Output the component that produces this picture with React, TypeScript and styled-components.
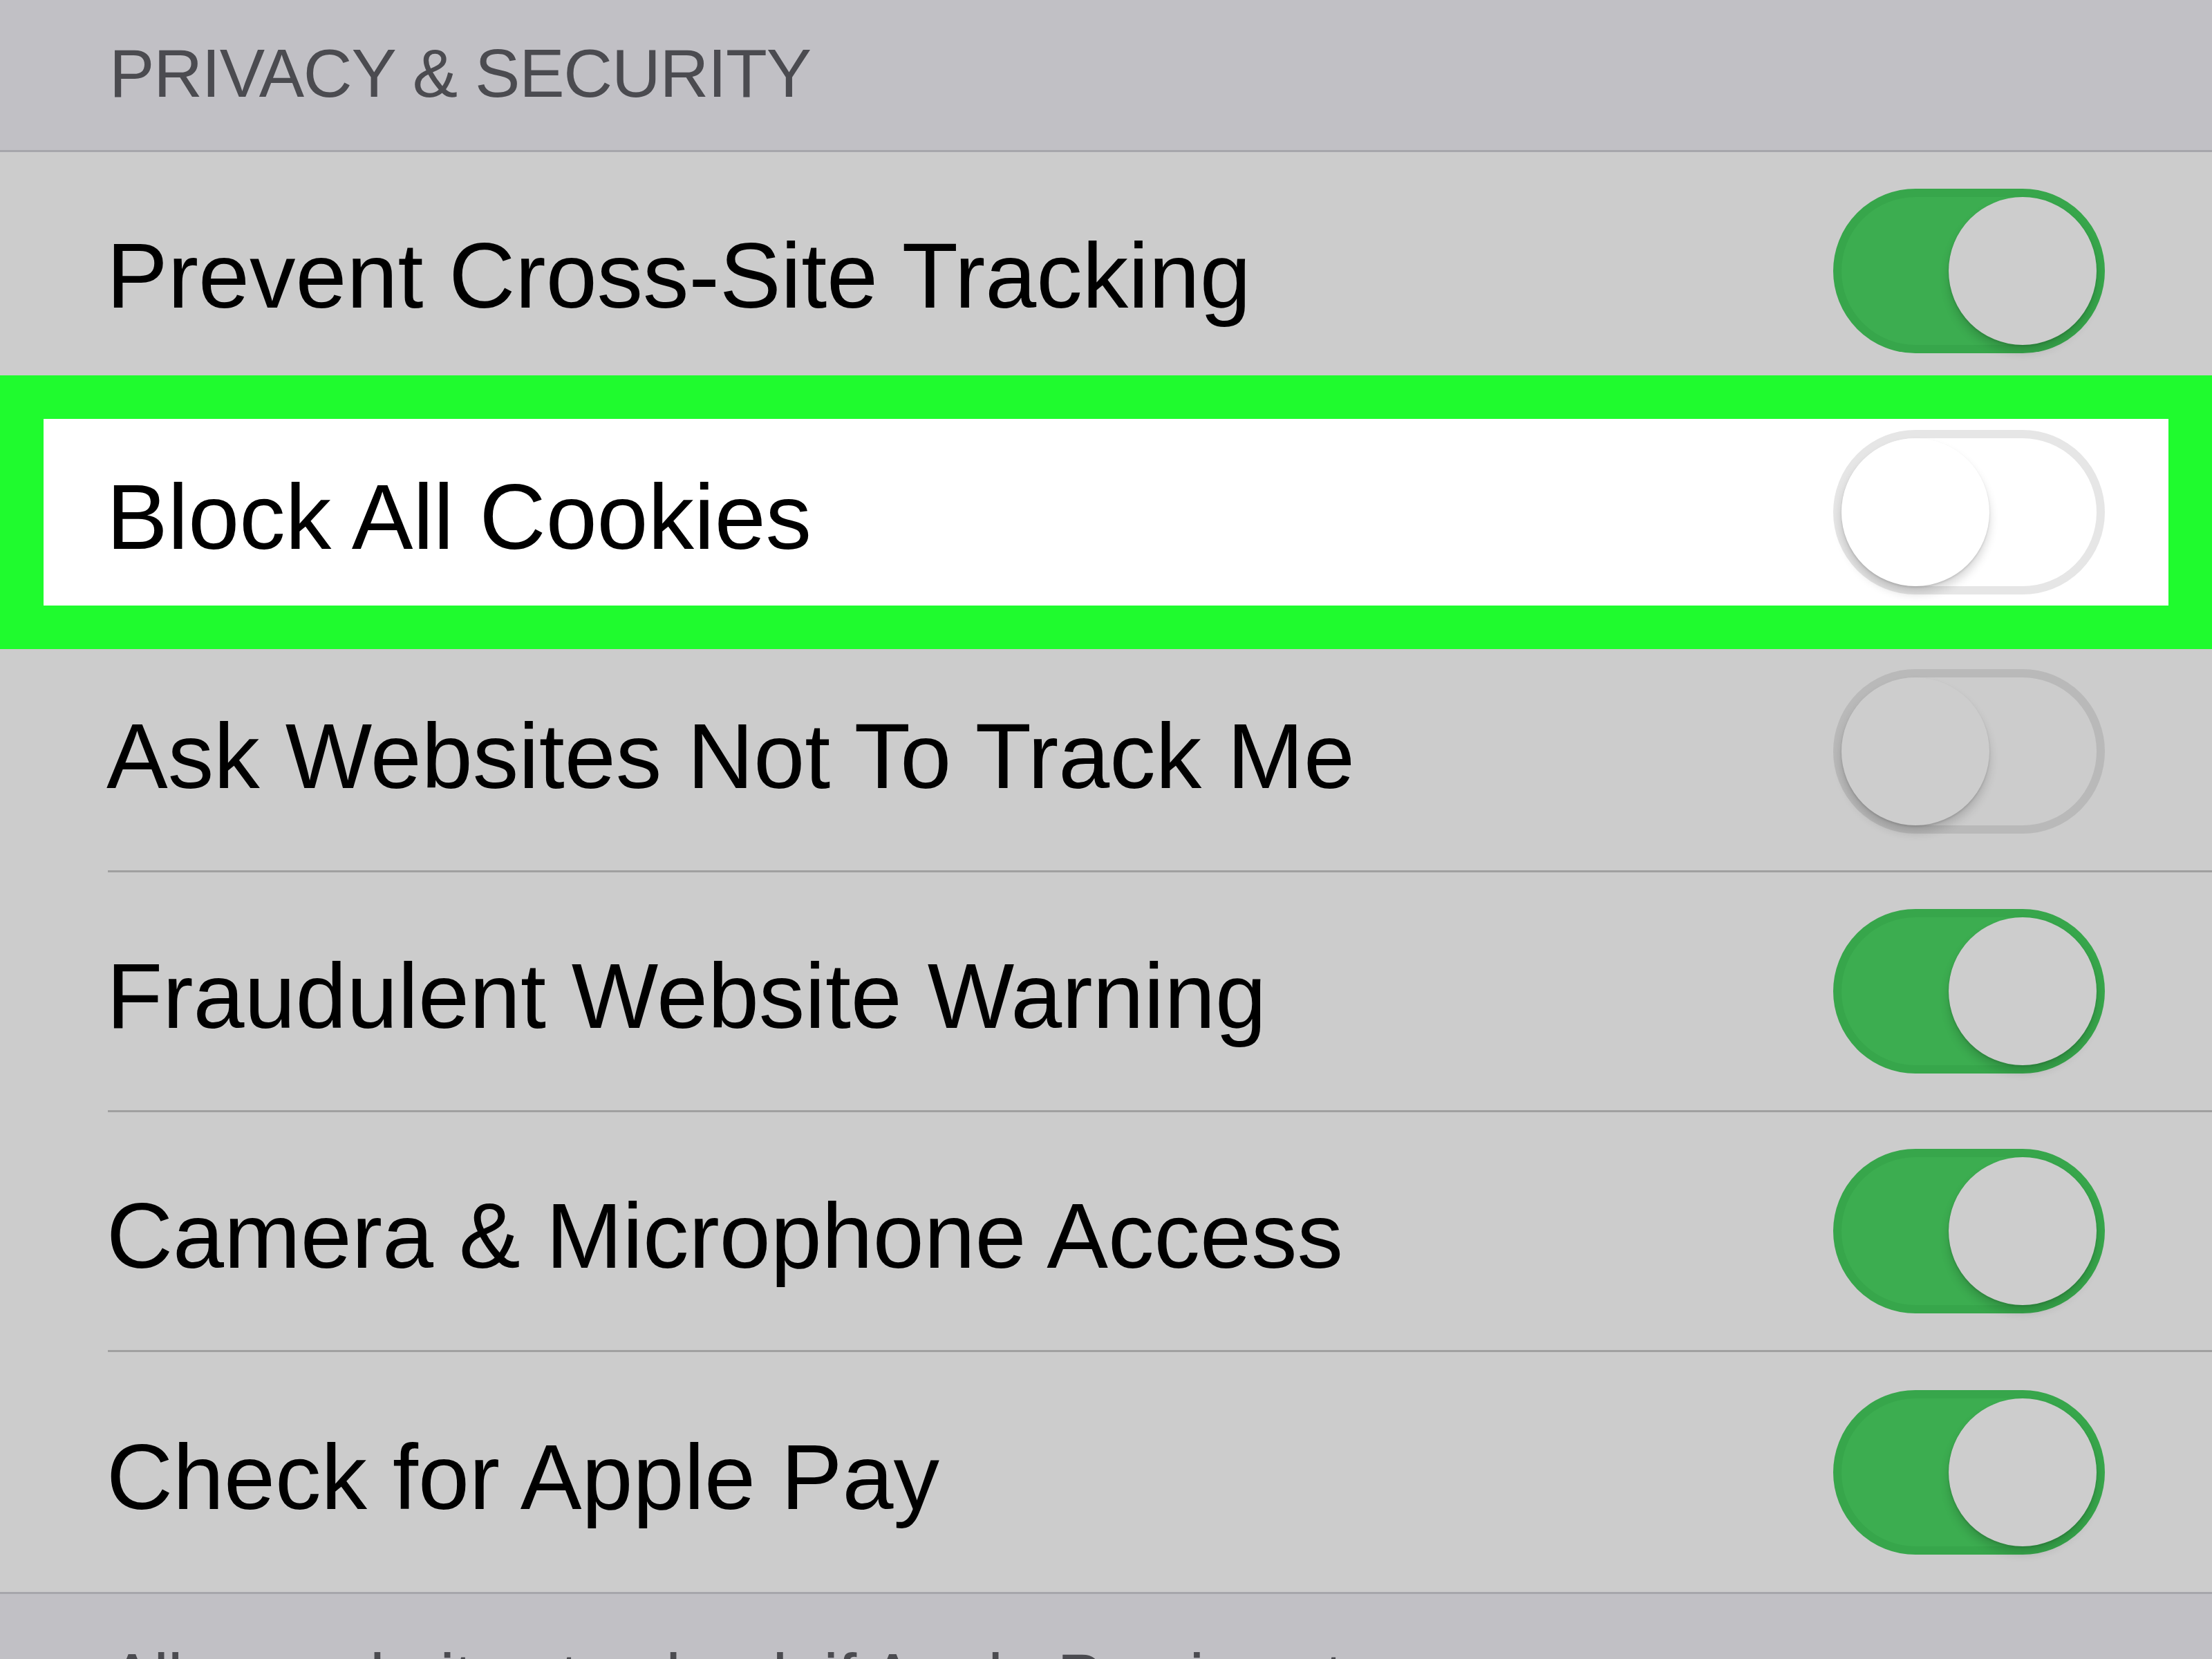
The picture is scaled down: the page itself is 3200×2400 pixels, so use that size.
import React from "react";
import styled, { createGlobalStyle } from "styled-components";

const GlobalStyle = createGlobalStyle`
  html, body {
    margin: 0;
    padding: 0;
    background: #c1c0c5;
  }
  body {
    font-family: "Liberation Sans", Arial, sans-serif;
  }
`;

// Styled Components
const Page = styled.div`
  width: 3200px;
  height: 2400px;
  overflow: hidden;
  background-color: #c1c0c5;
  display: flex;
  flex-direction: column;
`;

const SectionHeader = styled.div`
  flex-shrink: 0;
  height: 220px;
  box-sizing: border-box;
  padding: 57px 0 0 158px;
  border-bottom: 3px solid #a6a6ab;
  font-size: 98px;
  line-height: 1;
  letter-spacing: -1.2px;
  color: #4b4b50;
`;

const List = styled.div`
  flex-shrink: 0;
  background-color: #cccccc;
  display: flex;
  flex-direction: column;
`;

const Row = styled.div`
  height: 347px;
  box-sizing: border-box;
  padding-left: 156px;
  display: flex;
`;

const RowInner = styled.div<{ $last?: boolean }>`
  flex: 1;
  display: flex;
  align-items: center;
  justify-content: space-between;
  padding-right: 155px;
  border-bottom: ${(p) => (p.$last ? "none" : "3px solid #a0a0a0")};
`;

const Highlight = styled.div`
  position: relative;
  z-index: 1;
  height: 396px;
  margin: -24px 0;
  box-sizing: border-box;
  border: 63px solid #1ffb2e;
  background-color: #ffffff;
  display: flex;
  align-items: center;
  justify-content: space-between;
  padding: 0 92px 0 93px;
`;

const Label = styled.span`
  font-size: 133px;
  line-height: 1;
  padding-top: 15px;
  margin-left: -2px;
  color: #000;
  white-space: nowrap;
`;

const Track = styled.div<{ $on: boolean; $light?: boolean }>`
  width: 393px;
  height: 238px;
  box-sizing: border-box;
  border-radius: 119px;
  border: 12px solid
    ${(p) => (p.$on ? "#37a64b" : p.$light ? "#e6e6e6" : "#b9b9b9")};
  background-color: ${(p) =>
    p.$on ? "#3cad50" : p.$light ? "#ffffff" : "#cccccc"};
  display: flex;
  align-items: center;
  justify-content: ${(p) => (p.$on ? "flex-end" : "flex-start")};
  flex-shrink: 0;
`;

const Thumb = styled.div<{ $light?: boolean }>`
  width: 214px;
  height: 214px;
  border-radius: 50%;
  background-color: ${(p) => (p.$light ? "#ffffff" : "#cdcdcd")};
  box-shadow: 0 10px 14px rgba(0, 0, 0, 0.16), 0 2px 3px rgba(0, 0, 0, 0.12);
`;

const Footer = styled.div`
  flex: 1;
  border-top: 3px solid #a6a6ab;
  padding: 72px 0 0 158px;
  font-size: 98px;
  line-height: 1;
  letter-spacing: -1.2px;
  color: #4b4b50;
  white-space: nowrap;
`;

type Setting = {
  label: string;
  on: boolean;
  highlight?: boolean;
};

const settings: Setting[] = [
  { label: "Prevent Cross-Site Tracking", on: true },
  { label: "Block All Cookies", on: false, highlight: true },
  { label: "Ask Websites Not To Track Me", on: false },
  { label: "Fraudulent Website Warning", on: true },
  { label: "Camera & Microphone Access", on: true },
  { label: "Check for Apple Pay", on: true },
];

const Toggle = ({ on, light }: { on: boolean; light?: boolean }) => (
  <Track $on={on} $light={light}>
    <Thumb $light={light} />
  </Track>
);

const App = () => {
  return (
    <Page>
      <GlobalStyle />
      <SectionHeader>PRIVACY &amp; SECURITY</SectionHeader>
      <List>
        {settings.map((s, i) =>
          s.highlight ? (
            <Highlight key={s.label}>
              <Label>{s.label}</Label>
              <Toggle on={s.on} light />
            </Highlight>
          ) : (
            <Row key={s.label}>
              <RowInner $last={i === settings.length - 1}>
                <Label>{s.label}</Label>
                <Toggle on={s.on} />
              </RowInner>
            </Row>
          )
        )}
      </List>
      <Footer>Allow websites to check if Apple Pay is set up.</Footer>
    </Page>
  );
};

export default App;
